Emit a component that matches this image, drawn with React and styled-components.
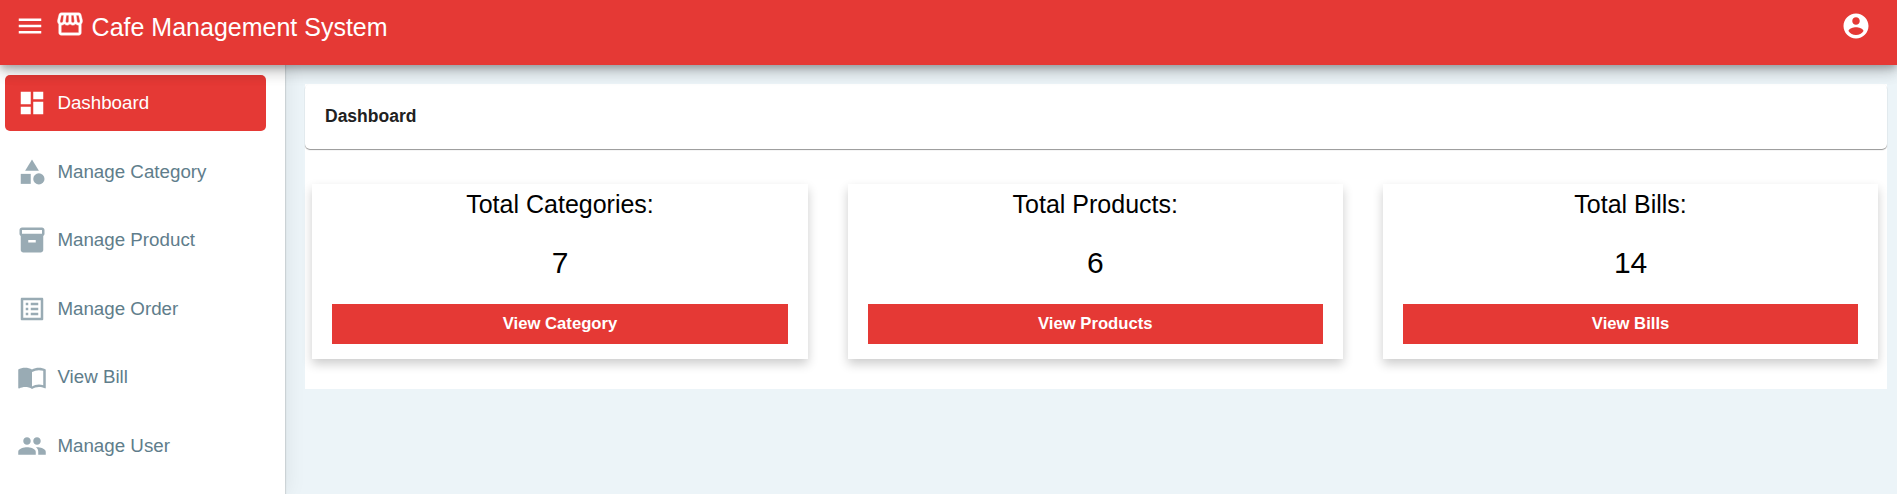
import React from "react";
import styled, { createGlobalStyle } from "styled-components";
import {
  MdMenu,
  MdOutlineStorefront,
  MdDashboard,
  MdCategory,
  MdInventory2,
  MdListAlt,
  MdImportContacts,
  MdPeople,
} from "react-icons/md";

const RED = "#e53935";

const GlobalStyle = createGlobalStyle`
  * { box-sizing: border-box; }
  html, body, #root { height: 100%; }
  body {
    margin: 0;
    overflow: hidden;
    background: #ecf4f8;
    font-family: "Liberation Sans", Arial, sans-serif;
  }
`;

const Page = styled.div`
  display: flex;
  flex-direction: column;
  height: 100%;
`;

const Toolbar = styled.header`
  position: relative;
  z-index: 3;
  display: flex;
  flex: none;
  height: 65px;
  padding: 11px 26px 0 15px;
  background: ${RED};
  color: #fff;
  box-shadow: 0 3.75px 6.25px -1.25px rgba(0, 0, 0, 0.2),
    0 7.5px 12.5px rgba(0, 0, 0, 0.14), 0 1.25px 22.5px rgba(0, 0, 0, 0.12);
`;

const IconButton = styled.button`
  display: flex;
  width: 30px;
  height: 30px;
  padding: 0;
  border: 0;
  background: none;
  color: inherit;
  font-size: 30px;
`;

const Brand = styled.div`
  display: flex;
  flex: 1;
  margin-left: 10px;
  font-size: 30px;

  svg {
    margin-top: -2px;
  }

  path:not([fill="none"]) {
    stroke-width: 0.3px;
  }
`;

const BrandName = styled.h1`
  margin: 2px 0 0 6.6px;
  font-size: 25px;
  font-weight: 400;
  line-height: 28px;
`;

const Body = styled.div`
  display: flex;
  flex: 1;
  min-height: 0;
`;

const Sidebar = styled.nav`
  position: relative;
  z-index: 1;
  display: flex;
  flex: none;
  flex-direction: column;
  gap: 12.4px;
  width: 285px;
  padding: 10px 19px 0 5px;
  background: #fff;
  box-shadow: 1px 0 20px rgba(0, 0, 0, 0.08), 1px 0 1px rgba(0, 0, 0, 0.1);
`;

const NavItem = styled.a`
  display: flex;
  flex: none;
  align-items: center;
  gap: 10px;
  height: 56.2px;
  padding-left: 12.4px;
  border-radius: 5px;
  background: ${({ $active }) => ($active ? RED : "transparent")};
  color: ${({ $active }) => ($active ? "#fff" : "#607d8b")};
  font-size: 18.75px;

  svg {
    color: ${({ $active }) => ($active ? "#fff" : "#99abb4")};
    font-size: 30px;
  }
`;

const Main = styled.main`
  flex: 1;
  padding: 19px 10px 0 20px;
`;

const Panel = styled.section`
  height: 305px;
  background: #fff;
`;

const PanelHeader = styled.div`
  display: flex;
  align-items: center;
  height: 65px;
  padding: 0 0 2px 20px;
  border-radius: 5px;
  background: #fff;
  box-shadow: 0 1px 1px rgba(0, 0, 0, 0.42);
`;

const PanelTitle = styled.h2`
  margin: 0;
  color: #212121;
  font-size: 17.5px;
  font-weight: 700;
  line-height: 22px;
`;

const Cards = styled.div`
  display: grid;
  grid-template-columns: repeat(3, 1fr);
  gap: 40px;
  padding: 35px 8.8px 0 7.4px;
`;

const Card = styled.article`
  height: 175px;
  padding: 0 20px;
  text-align: center;
  color: #000;
  box-shadow: 0 5px 10px rgba(0, 0, 0, 0.2);
`;

const CardTitle = styled.h3`
  margin: 0;
  padding-top: 5px;
  font-size: 25px;
  font-weight: 400;
  line-height: 30px;
`;

const CardCount = styled.p`
  margin: 27px 0 0;
  font-size: 30px;
  line-height: 34px;
`;

const CardButton = styled.button`
  display: block;
  width: 100%;
  height: 40px;
  margin-top: 24px;
  padding: 0 0 1px;
  border: 0;
  background: ${RED};
  color: #fff;
  font: 700 16.67px "Liberation Sans", Arial, sans-serif;
`;

const AccountIcon = () => (
  <svg width="30" height="30" viewBox="0 0 24 24" fill="currentColor">
    <path d="M12 2C6.48 2 2 6.48 2 12s4.48 10 10 10 10-4.48 10-10S17.52 2 12 2zm0 3c1.66 0 3 1.34 3 3s-1.34 3-3 3-3-1.34-3-3 1.34-3 3-3zm0 14.2c-2.5 0-4.71-1.28-6-3.22.03-1.99 4-3.08 6-3.08 1.99 0 5.97 1.09 6 3.08-1.29 1.94-3.5 3.22-6 3.22z" />
  </svg>
);

const NAV = [
  { label: "Dashboard", Icon: MdDashboard, active: true },
  { label: "Manage Category", Icon: MdCategory },
  { label: "Manage Product", Icon: MdInventory2 },
  { label: "Manage Order", Icon: MdListAlt },
  { label: "View Bill", Icon: MdImportContacts },
  { label: "Manage User", Icon: MdPeople },
];

const CARDS = [
  { title: "Total Categories:", count: 7, action: "View Category" },
  { title: "Total Products:", count: 6, action: "View Products" },
  { title: "Total Bills:", count: 14, action: "View Bills" },
];

export default function App() {
  return (
    <Page>
      <GlobalStyle />
      <Toolbar>
        <IconButton aria-label="Menu">
          <MdMenu />
        </IconButton>
        <Brand>
          <MdOutlineStorefront />
          <BrandName>Cafe Management System</BrandName>
        </Brand>
        <IconButton aria-label="Account">
          <AccountIcon />
        </IconButton>
      </Toolbar>
      <Body>
        <Sidebar>
          {NAV.map(({ label, Icon, active }) => (
            <NavItem key={label} $active={active}>
              <Icon />
              <span>{label}</span>
            </NavItem>
          ))}
        </Sidebar>
        <Main>
          <Panel>
            <PanelHeader>
              <PanelTitle>Dashboard</PanelTitle>
            </PanelHeader>
            <Cards>
              {CARDS.map(({ title, count, action }) => (
                <Card key={title}>
                  <CardTitle>{title}</CardTitle>
                  <CardCount>{count}</CardCount>
                  <CardButton>{action}</CardButton>
                </Card>
              ))}
            </Cards>
          </Panel>
        </Main>
      </Body>
    </Page>
  );
}
